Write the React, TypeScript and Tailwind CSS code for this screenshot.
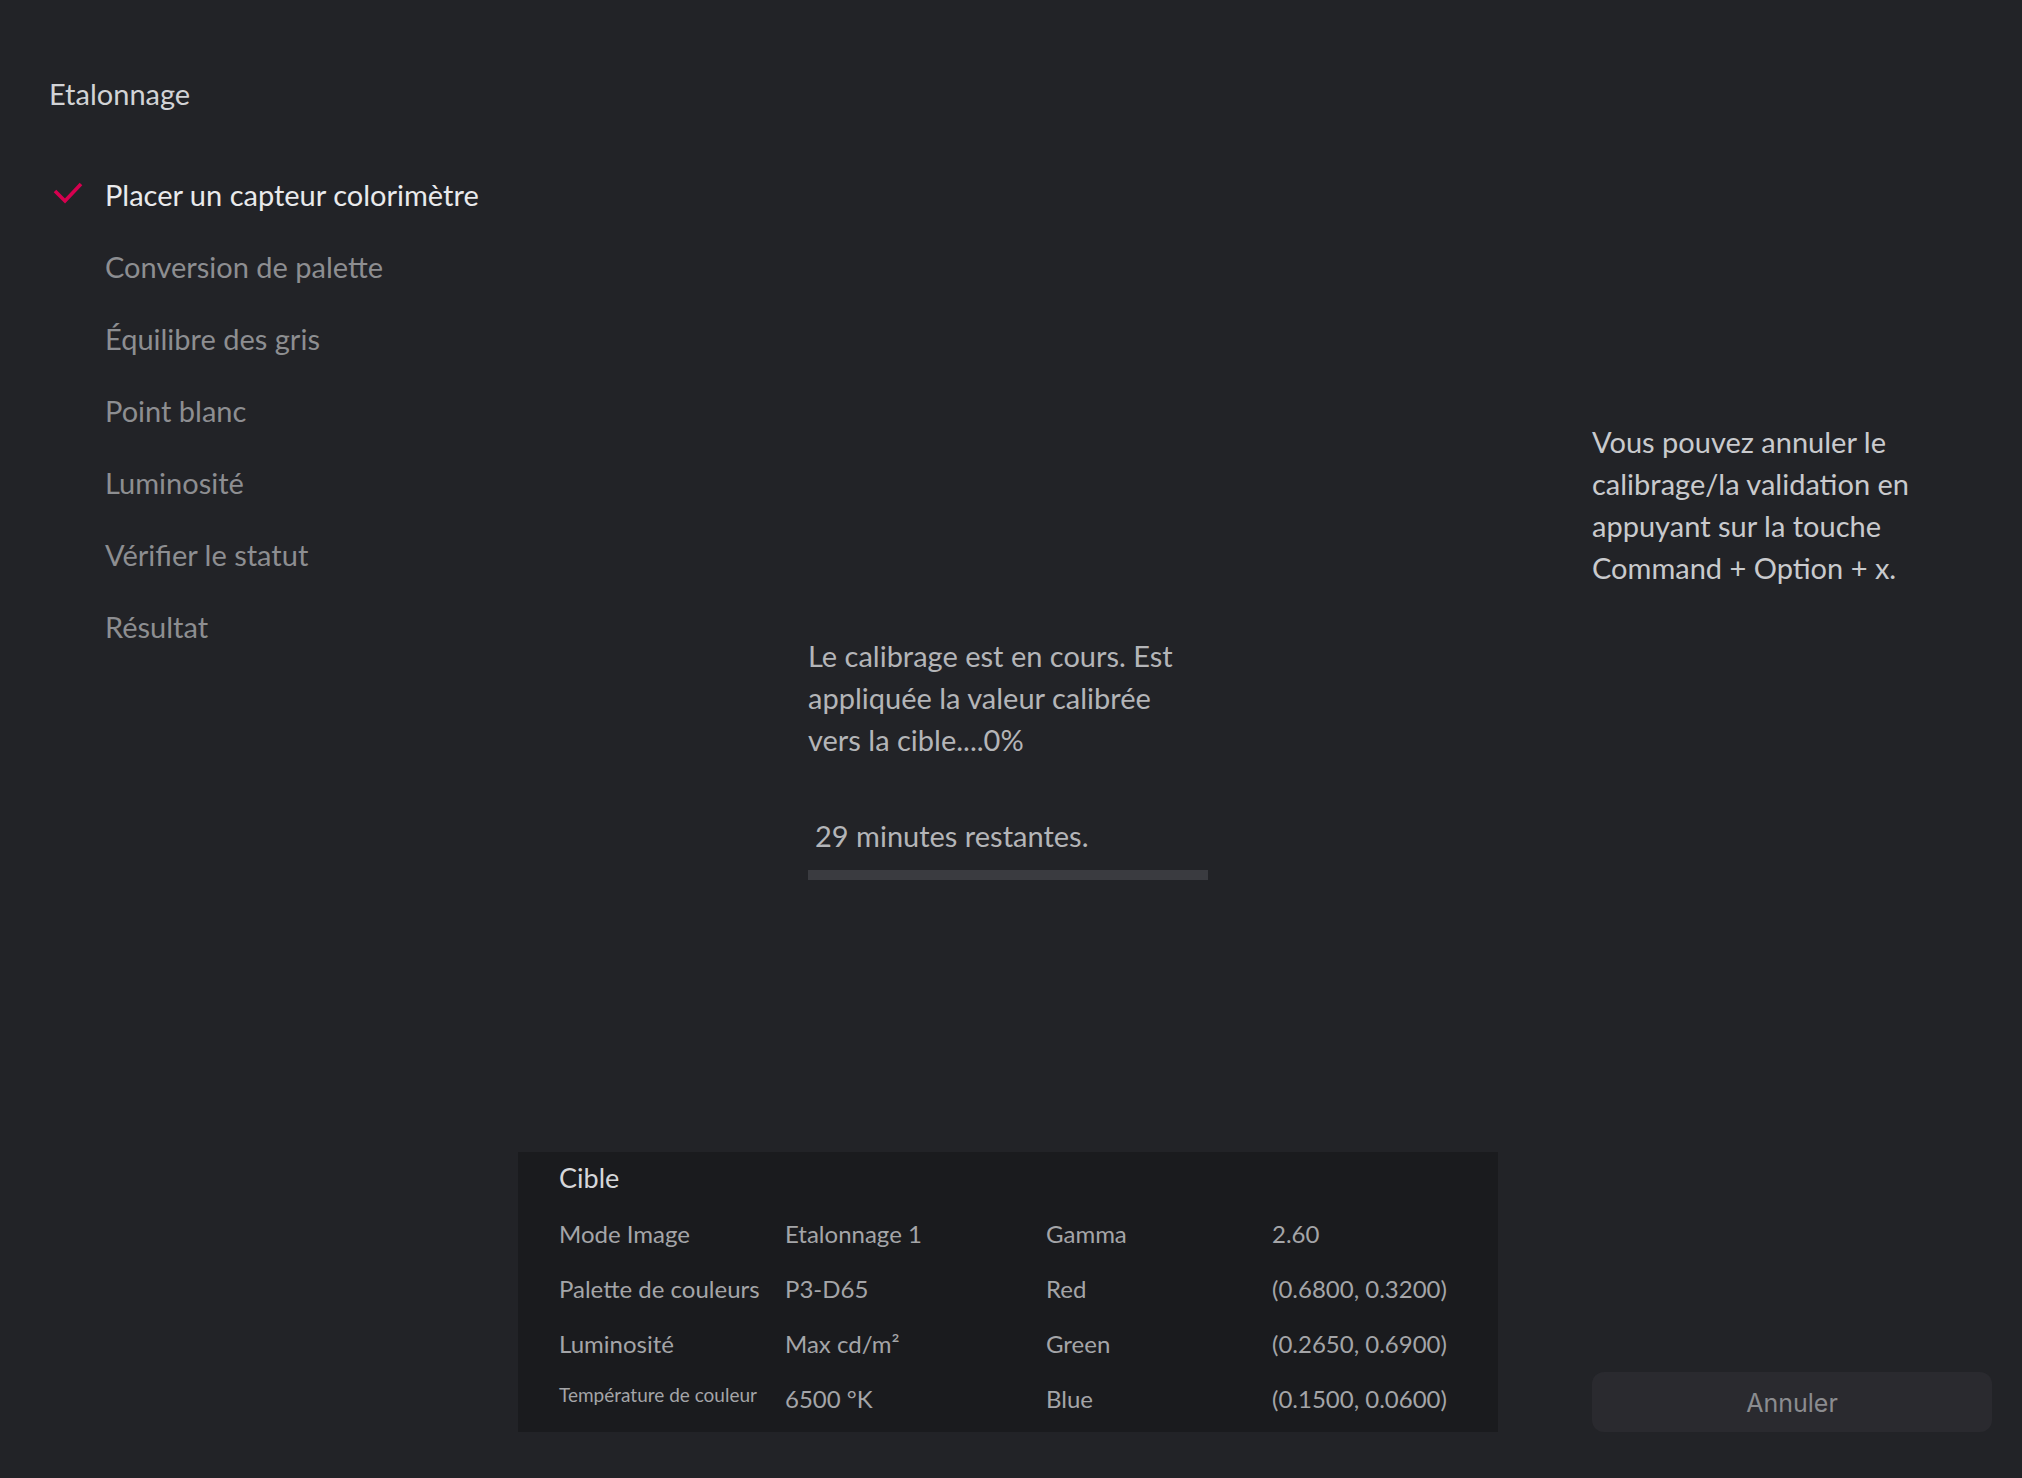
import React from "react";

const STEPS = [
  "Placer un capteur colorimètre",
  "Conversion de palette",
  "Équilibre des gris",
  "Point blanc",
  "Luminosité",
  "Vérifier le statut",
  "Résultat",
];

const ROWS: [string, string, string, string][] = [
  ["Mode Image", "Etalonnage 1", "Gamma", "2.60"],
  ["Palette de couleurs", "P3-D65", "Red", "(0.6800, 0.3200)"],
  ["Luminosité", "Max cd/m²", "Green", "(0.2650, 0.6900)"],
  ["Température de couleur", "6500 °K", "Blue", "(0.1500, 0.0600)"],
];

export default function App() {
  return (
    <div
      className="flex h-[1478px] w-full overflow-hidden bg-[#222327]"
      style={{ fontFamily: "Lato, 'Noto Sans', sans-serif" }}
    >
      <aside className="w-[518px] shrink-0 pl-[49px] pt-[74px]">
        <h1 className="text-[29px] leading-[40px] text-[#d2d3d6]">Etalonnage</h1>
        <ul className="mt-[45px]">
          {STEPS.map((s, i) => (
            <li key={s} className="flex h-[72px] items-center">
              <span className="flex w-[56px] shrink-0 items-center">
                {i === 0 && (
                  <svg width="36" height="24" viewBox="0 0 36 24" className="-mt-[5px]">
                    <polyline
                      points="6,10 16,20 32,3"
                      fill="none"
                      stroke="#d6004f"
                      strokeWidth="3.6"
                    />
                  </svg>
                )}
              </span>
              <span
                className={`text-[29px] leading-[72px] ${
                  i === 0 ? "text-[#e9eaec]" : "text-[#8d8e91]"
                }`}
              >
                {s}
              </span>
            </li>
          ))}
        </ul>
      </aside>

      <main className="flex flex-1 flex-col">
        <div className="flex flex-1">
          <div className="w-[980px] shrink-0">
            <div className="mx-auto w-[400px] pt-[635px]">
              <p className="whitespace-nowrap text-[29px] leading-[42px] text-[#b4b5b8]">
                Le calibrage est en cours. Est
                <br />
                appliquée la valeur calibrée
                <br />
                vers la cible....0%
              </p>
              <p className="mt-[54px] pl-[7px] text-[29px] leading-[42px] text-[#b4b5b8]">
                29 minutes restantes.
              </p>
              <div className="mt-[13px] h-[10px] w-[400px] bg-[#3a3b40]" />
            </div>
          </div>
          <div className="ml-[94px] w-[400px] pt-[421px]">
            <p className="whitespace-nowrap text-[29px] leading-[42px] text-[#c9cacd]">
              Vous pouvez annuler le
              <br />
              calibrage/la validation en
              <br />
              appuyant sur la touche
              <br />
              Command + Option + x.
            </p>
          </div>
        </div>

        <div className="flex items-end pb-[46px]">
          <section className="h-[280px] w-[980px] shrink-0 bg-[#1a1b1e] px-[41px] pt-[8px]">
            <h2 className="text-[27px] leading-[36px] text-[#d6d7da]">Cible</h2>
            <div className="mt-[10px] grid grid-cols-[226px_261px_226px_1fr] text-[24px] leading-[55px] text-[#a4a5a8]">
              {ROWS.map((r) => (
                <React.Fragment key={r[0]}>
                  <span
                    className={
                      r[0].length > 20
                        ? "whitespace-nowrap text-[19px] leading-[48px]"
                        : "whitespace-nowrap"
                    }
                  >
                    {r[0]}
                  </span>
                  <span className="whitespace-nowrap">{r[1]}</span>
                  <span className="whitespace-nowrap">{r[2]}</span>
                  <span className="whitespace-nowrap">{r[3]}</span>
                </React.Fragment>
              ))}
            </div>
          </section>
          <button
            className="ml-[94px] h-[60px] w-[400px] rounded-[12px] bg-[#2a2a2f] pt-[4px] text-[25px] text-[#8b8c8f]"
            style={{ fontFamily: "Inter, 'Liberation Sans', sans-serif" }}
          >
            Annuler
          </button>
        </div>
      </main>
    </div>
  );
}
